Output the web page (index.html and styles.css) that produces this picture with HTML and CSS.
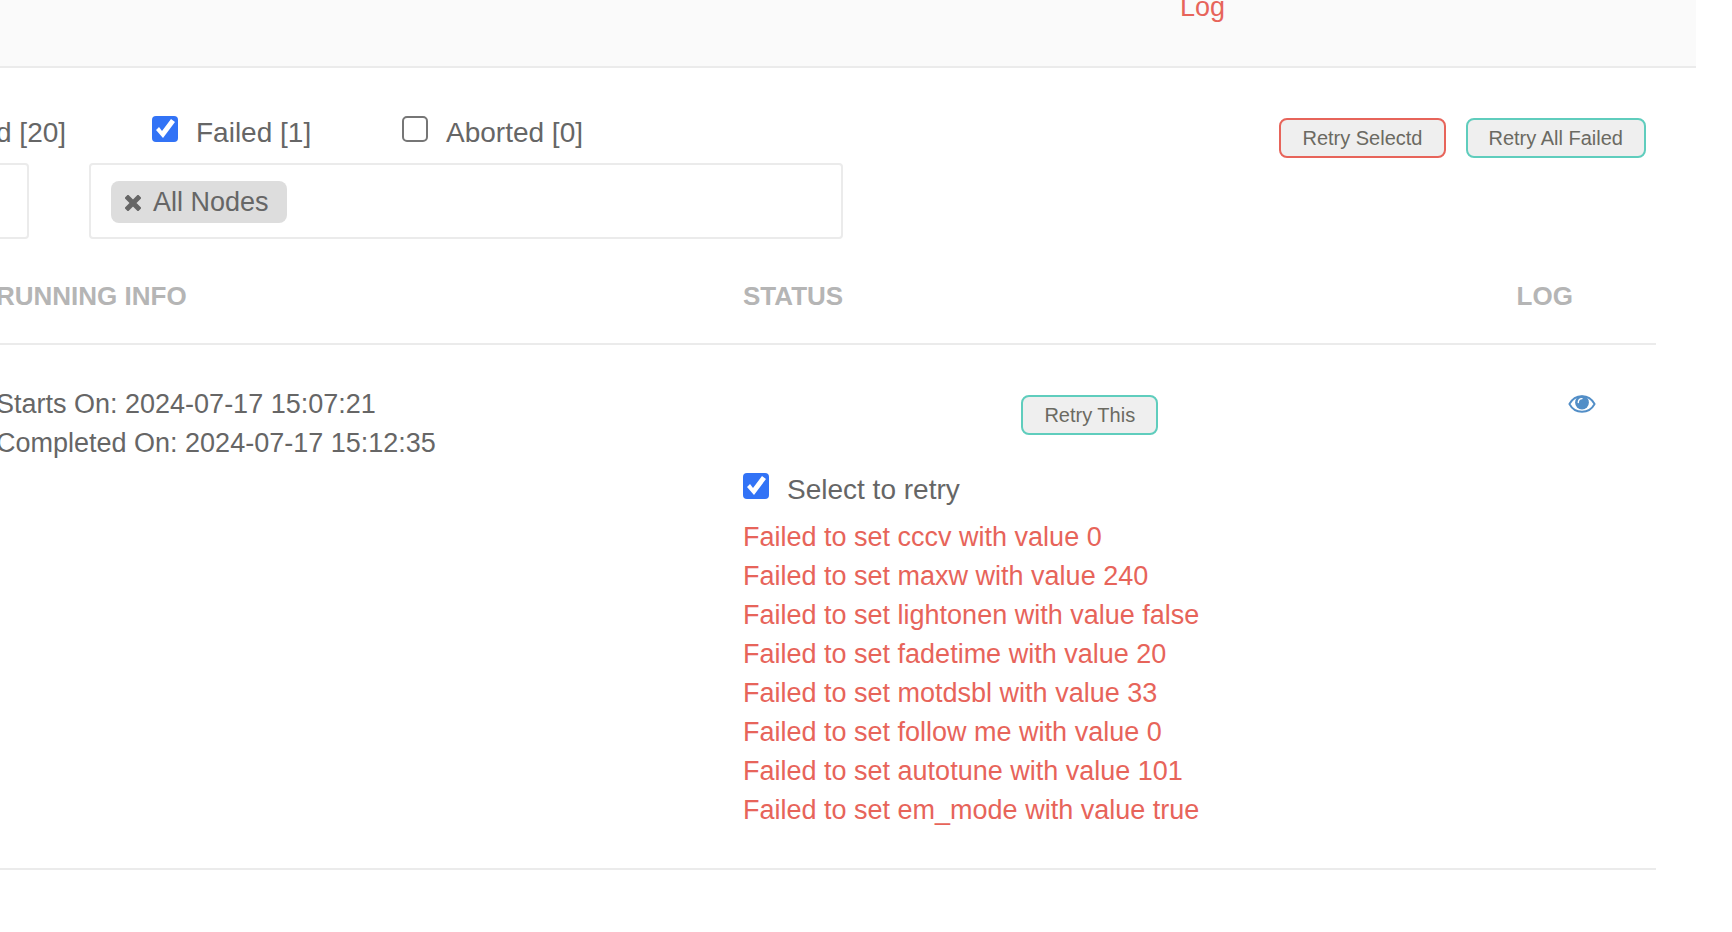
FILE: index.html
```
<!DOCTYPE html>
<html lang="en">
<head>
<meta charset="utf-8">
<title>Job log</title>
<link rel="stylesheet" href="styles.css">
</head>
<body>
<header class="topbar"><a class="topbar-link" href="#log">Log</a></header>
<main class="content">
  <div class="toolbar">
    <div class="filters">
      <span class="filter-first">d [20]</span>
      <label class="check"><input class="box" type="checkbox" checked><span class="check-text">Failed [1]</span></label>
      <label class="check"><input class="box" type="checkbox"><span class="check-text">Aborted [0]</span></label>
    </div>
    <div class="actions">
      <button class="btn btn-danger" type="button">Retry Selectd</button>
      <button class="btn" type="button">Retry All Failed</button>
    </div>
  </div>
  <div class="selects">
    <div class="select select-first"></div>
    <div class="select">
      <span class="chip">
        <button class="chip-remove" type="button" aria-label="Remove">
          <svg width="16" height="16" viewBox="0 0 16 16"><path d="M3 3 13 13M13 3 3 13" stroke="currentColor" stroke-width="5" stroke-linecap="square" stroke-linejoin="round" fill="none"/></svg>
        </button>
        <span>All Nodes</span>
      </span>
    </div>
  </div>
  <table class="table">
    <thead>
      <tr><th class="col-info">RUNNING INFO</th><th class="col-status">STATUS</th><th class="col-log">LOG</th></tr>
    </thead>
    <tbody>
      <tr>
        <td>Starts On: 2024-07-17 15:07:21<br>Completed On: 2024-07-17 15:12:35</td>
        <td class="status">
          <div class="retry"><button class="btn" type="button">Retry This</button></div>
          <label class="check"><input class="box" type="checkbox" checked><span class="check-text">Select to retry</span></label>
          <ul class="errors">
            <li>Failed to set cccv with value 0</li>
            <li>Failed to set maxw with value 240</li>
            <li>Failed to set lightonen with value false</li>
            <li>Failed to set fadetime with value 20</li>
            <li>Failed to set motdsbl with value 33</li>
            <li>Failed to set follow me with value 0</li>
            <li>Failed to set autotune with value 101</li>
            <li>Failed to set em_mode with value true</li>
          </ul>
        </td>
        <td class="view">
          <a class="eye" href="#view" aria-label="View log">
            <svg width="28" height="18" viewBox="0 0 28 18"><path d="M1.400 9C4 4.200 8.600 1.200 14 1.200S24 4.200 26.600 9C24 13.800 19.400 16.800 14 16.800S4 13.800 1.400 9Z" fill="#fff" stroke="currentColor" stroke-width="1.900" stroke-linejoin="round"/><circle cx="14" cy="7.500" r="6.900" fill="currentColor"/><path d="M10.300 7.500A3.900 3.900 0 0 1 14 3.600" fill="none" stroke="#fff" stroke-width="1.400" stroke-linecap="round"/></svg>
          </a>
        </td>
      </tr>
    </tbody>
  </table>
</main>
</body>
</html>
```
FILE: styles.css
```
* {
  box-sizing: border-box;
}

body {
  margin: 0;
  overflow-x: hidden;
  background: #fff;
  color: #666;
  font: 27px/39px "Liberation Sans", Arial, sans-serif;
}

.topbar {
  display: flex;
  justify-content: flex-end;
  height: 68px;
  margin-right: 36px;
  padding-right: 471px;
  background: #fafafa;
  border-bottom: 2px solid #ebebeb;
}

.topbar-link {
  margin-top: -7px;
  color: #e7645a;
  line-height: 28px;
  text-decoration: none;
}

.content {
  margin: 0 76px 0 -4px;
}

.toolbar {
  display: flex;
  justify-content: space-between;
  align-items: flex-start;
  padding: 48px 10px 0 0;
}

.filters {
  display: flex;
  font-size: 28px;
  line-height: 34px;
}

.filter-first {
  width: 156px;
}

.filters .check {
  width: 250px;
}

.check {
  display: flex;
  align-items: flex-start;
  gap: 18px;
  font-size: 28px;
  line-height: 34px;
}

.box {
  appearance: none;
  flex: none;
  width: 26px;
  height: 26px;
  margin: 0;
  border: 2px solid #767676;
  border-radius: 5px;
  background: #fff;
}

.box:checked {
  border: 0;
  border-radius: 4px;
  background: #3273f6;
}

.box:checked::before {
  content: "";
  display: block;
  width: 26px;
  height: 26px;
  background: #fff;
  clip-path: polygon(4px 14px, 7px 11px, 10px 15px, 19px 3px, 23px 6px, 11px 22px);
}

.actions {
  display: flex;
  gap: 20px;
  padding-top: 2px;
}

.btn {
  height: 40px;
  padding: 0 21px;
  border: 2px solid #5fcdbd;
  border-radius: 8px;
  background: #efefef;
  color: #6b6a62;
  font: 20px/24px "Liberation Sans", Arial, sans-serif;
}

.btn-danger {
  border-color: #e7645a;
}

.selects {
  display: flex;
  gap: 60px;
  margin-top: 5px;
}

.select {
  display: flex;
  align-items: flex-start;
  width: 754px;
  height: 76px;
  padding: 16px 20px;
  border: 2px solid #ebebeb;
  border-radius: 4px;
}

.select-first {
  width: 33px;
  border-left: 0;
  padding: 0;
}

.chip {
  display: flex;
  align-items: center;
  gap: 12px;
  height: 42px;
  padding: 0 18px 0 14px;
  border-radius: 8px;
  background: #ddd;
}

.chip-remove {
  display: flex;
  padding: 2px 0 0;
  border: 0;
  background: none;
  color: #666;
}

.table {
  width: 100%;
  table-layout: fixed;
  border-collapse: collapse;
}

.table th {
  padding: 38px 0 27px;
  border-bottom: 2px solid #ebebeb;
  color: #b5b5b5;
  font-size: 26px;
  text-align: left;
}

.col-info {
  width: 45%;
}

.col-status {
  width: 46.6%;
}

.table td {
  padding: 40px 0 38px;
  border-bottom: 2px solid #ebebeb;
  vertical-align: top;
}

.table .status {
  padding-top: 50px;
  padding-right: 80px;
}

.retry {
  display: flex;
  justify-content: center;
  margin-bottom: 38px;
}

.errors {
  margin: 11px 0 0;
  padding: 0;
  list-style: none;
  color: #e7645a;
}

.table .view {
  padding-right: 60px;
}

.eye {
  display: flex;
  justify-content: flex-end;
  padding-top: 10px;
  color: #528ec7;
}
```
